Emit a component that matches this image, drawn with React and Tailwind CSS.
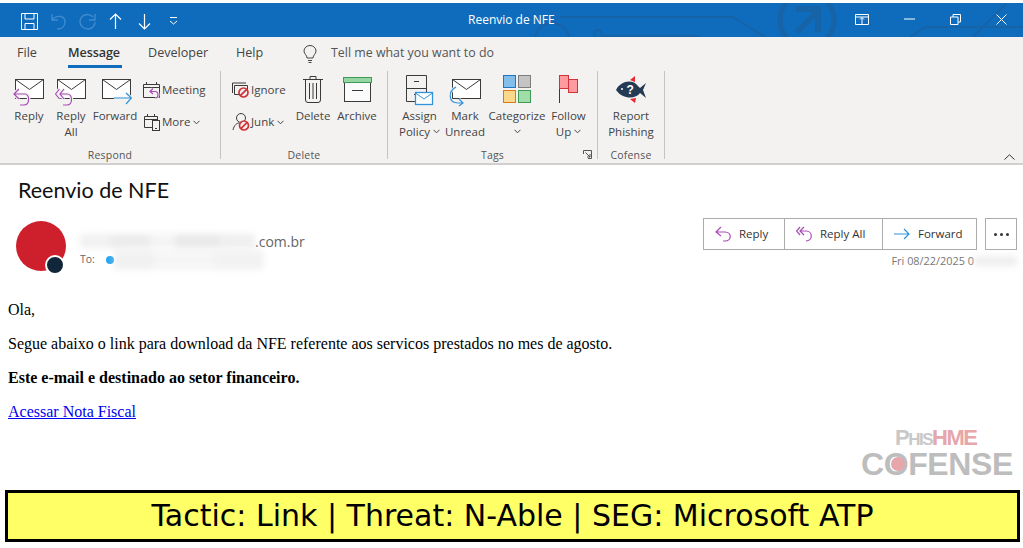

const ui = { fontFamily: '"Open Sans","Noto Sans",sans-serif' };

const P = "#a94cb5";
const B = "#2f93dc";
const K = "#3a3a3a";
const BG = "#f3f2f1";

function Env({ x = 0, y = 0, w = 28, h = 19 }) {
  return (
    <g transform={`translate(${x} ${y})`} fill="none" stroke={K} strokeWidth="1">
      <rect x=".5" y=".5" width={w} height={h} fill="#fff" />
      <path d={`M.5 .5 L${w / 2 + 0.5} ${h * 0.55} L${w + 0.5} .5`} />
    </g>
  );
}

function ReplyIcon() {
  const d = "M6 11 L1 16 L6 21 M1 16 H12 C17 16 17 27 11 27 H7";
  return (
    <svg width="32" height="29" viewBox="0 0 32 29" fill="none">
      <Env x="2" y="1" />
      <path d={d} stroke={BG} strokeWidth="3.5" />
      <path d={d} stroke={P} strokeWidth="1.2" />
    </svg>
  );
}
function ReplyAllIcon() {
  const d = "M4.5 11 L.5 16 L4.5 21 M9 11 L5 16 L9 21 M5 16 H12 C18 16 18 27 12 27 H8";
  return (
    <svg width="32" height="29" viewBox="0 0 32 29" fill="none">
      <Env x="2" y="1" />
      <path d={d} stroke={BG} strokeWidth="3.5" />
      <path d={d} stroke={P} strokeWidth="1.2" />
    </svg>
  );
}
function ForwardIcon() {
  const d = "M16 20 H33 M28 15 L33.5 20 L28 26";
  return (
    <svg width="34" height="29" viewBox="0 0 34 29" fill="none">
      <Env x="4" y="1" />
      <path d={d} stroke={BG} strokeWidth="3" />
      <path d={d} stroke={B} strokeWidth="1.2" />
    </svg>
  );
}
function MeetingIcon() {
  return (
    <svg width="18" height="18" viewBox="0 0 18 18" fill="none">
      <path d="M.5 3.5 H16.5 V16.5 H.5 Z M.5 6.5 H16.5 M3.5 1 V4 M13.5 1 V4" stroke={K} />
      <path d="M10 7.5 L7 10.5 L10 13 M7 10.5 H12 C16 10.5 16 17 12 17" stroke={BG} strokeWidth="3" />
      <path d="M10 7.5 L7 10.5 L10 13 M7 10.5 H12 C16 10.5 16 17 12 17" stroke={P} strokeWidth="1.2" />
    </svg>
  );
}
function MoreIcon() {
  return (
    <svg width="17" height="18" viewBox="0 0 17 18" fill="none" stroke={K}>
      <path d="M.5 3.5 H13.5 V14.5 H.5 Z M.5 6.5 H13.5 M3.5 1 V4 M10.5 1 V4" />
      <rect x="8.5" y="7.5" width="7" height="10" fill={BG} />
      <path d="M11 15.5 H13" />
    </svg>
  );
}
function NoSign({ x, y, r = 4.5 }) {
  return (
    <g transform={`translate(${x} ${y})`} fill={BG} stroke="#d13438" strokeWidth="1.7">
      <circle r={r} />
      <path d={`M${-r * 0.7} ${r * 0.7} L${r * 0.7} ${-r * 0.7}`} />
    </g>
  );
}
function IgnoreIcon() {
  return (
    <svg width="18" height="16" viewBox="0 0 18 16" fill="none" stroke={K}>
      <path d="M.5 1 H14 M.5 1 V11 M2.5 3.5 H15.5 V9 M2.5 3.5 V12.5 H7" />
      <NoSign x="11.5" y="10.5" />
    </svg>
  );
}
function JunkIcon() {
  return (
    <svg width="18" height="18" viewBox="0 0 18 18" fill="none" stroke={K}>
      <circle cx="9" cy="5" r="4.5" />
      <path d="M1 17 C2 12 5 10 7 10" />
      <NoSign x="12" y="12.5" />
    </svg>
  );
}
function TrashIcon() {
  return (
    <svg width="22" height="28" viewBox="0 0 22 28" fill="none" stroke={K}>
      <path d="M1 4.5 H21 M8 4.5 V1.5 H14 V4.5 M3.5 4.5 V25 Q3.5 27.5 6 27.5 H16 Q18.5 27.5 18.5 25 V4.5 M7.5 8 V24 M11 8 V24 M14.5 8 V24" />
    </svg>
  );
}
function ArchiveIcon() {
  return (
    <svg width="29" height="25" viewBox="0 0 29 25" fill="none">
      <rect x="1.5" y="5.5" width="26" height="19" stroke={K} fill="#fbfbfb" />
      <rect x=".5" y=".5" width="28" height="5" fill="#96d6a4" stroke="#3f9a55" />
      <path d="M9 13.5 H20" stroke={K} />
    </svg>
  );
}
function PolicyIcon() {
  return (
    <svg width="28" height="31" viewBox="0 0 28 31" fill="none">
      <path d="M.5 .5 H20.5 V26.5 H.5 Z M.5 13.5 H20.5 M8 6.5 H13 M8 19.5 H13" stroke={K} />
      <rect x="9.5" y="17.5" width="17" height="12" fill="#fff" stroke={B} strokeWidth="1.3" />
      <path d="M9.5 18 L18 24 L26.5 18" stroke={B} />
    </svg>
  );
}
function UnreadIcon() {
  const d = "M7 9 C-1 13 -1 25 9 25 L13 25 M10 21 L14 25 L10 28";
  return (
    <svg width="32" height="29" viewBox="0 0 32 29" fill="none">
      <Env x="3" y="1" />
      <path d={d} stroke={BG} strokeWidth="3" />
      <path d={d} stroke={B} strokeWidth="1.2" />
    </svg>
  );
}
function CategorizeIcon() {
  return (
    <svg width="29" height="29" viewBox="0 0 29 29">
      <rect x=".5" y=".5" width="12" height="12" fill="#83bdea" stroke="#1f76c4" />
      <rect x="15.5" y=".5" width="12" height="12" fill="#c4c4c4" stroke="#7d7d7d" />
      <rect x=".5" y="15.5" width="12" height="12" fill="#fbd98a" stroke="#d77a1c" />
      <rect x="15.5" y="15.5" width="12" height="12" fill="#a0dda8" stroke="#3f9a55" />
    </svg>
  );
}
function FlagIcon() {
  return (
    <svg width="20" height="29" viewBox="0 0 20 29">
      <path d="M.5 1 V28" stroke={K} />
      <rect x=".5" y=".5" width="9" height="13" fill="#ff9a9e" stroke="#d13438" />
      <rect x="9.5" y="4.5" width="9" height="13" fill="#ff9a9e" stroke="#d13438" />
    </svg>
  );
}
function FishIcon() {
  return (
    <svg width="32" height="28" viewBox="0 0 32 28">
      <path d="M15 4 L20 0 L20 6 Z M15 23 L20 27 L21 22 Z" fill="#e8262f" />
      <path d="M1 14 C5 6 15 3 21 8 C23 10 24 11 25 12 L31 7 L28 14 L31 22 L25 17 C21 23 8 24 1 14 Z" fill="#243b53" />
      <circle cx="7" cy="13" r="1" fill="#fff" />
      <text x="11.5" y="18" fontSize="12" fontWeight="700" fill="#fff" fontFamily="Liberation Sans, sans-serif">?</text>
    </svg>
  );
}
function Chev({ className = "" }) {
  return (
    <svg width="7" height="5" viewBox="0 0 7 5" className={className} fill="none" stroke="#444">
      <path d="M.5 .8 L3.5 3.8 L6.5 .8" />
    </svg>
  );
}

function Big({ icon, l1, l2, w, chev, top = "pt-[4px]" }) {
  return (
    <div className="flex flex-col items-center shrink-0" style={{ width: w }}>
      <div className={`h-[33px] flex items-start justify-center ${top}`}>{icon}</div>
      <div className="mt-[1px] text-[11.5px] leading-[16px] whitespace-nowrap">{l1}</div>
      <div className="text-[11.5px] leading-[15px] whitespace-nowrap flex items-center gap-[3px] h-[15px]">
        {l2}
        {chev && <Chev />}
      </div>
    </div>
  );
}
function Small({ icon, label }) {
  return (
    <div className="flex items-center gap-[1px] h-[20px] text-[11.5px] whitespace-nowrap">
      <span className="w-[18px] flex justify-center">{icon}</span>
      {label}
    </div>
  );
}
function Group({ w, label, children, launcher }) {
  return (
    <div className="relative shrink-0 flex flex-col border-r border-[#c4c4c4] h-[88px] mt-[1px]" style={{ width: w }}>
      <div className="flex flex-1 items-start">{children}</div>
      <div className="text-[10.5px] leading-[14px] mb-[-3px] text-center text-[#555] tracking-[0.2px]">{label}</div>
      {launcher}
    </div>
  );
}

function Action({ icon, label, w }) {
  return (
    <div className="flex items-center pl-[11px] gap-[7px] h-full border-r border-[#ababab] last:border-r-0 text-[11.5px] text-[#333]" style={{ width: w }}>
      {icon}
      {label}
    </div>
  );
}

export default function App() {
  return (
    <div className="relative w-[1023px] h-[548px] bg-white overflow-hidden flex flex-col" style={ui}>
      {/* title bar */}
      <div className="relative mt-[3px] h-[34px] shrink-0 bg-[#0f6cbd] text-white flex items-center pl-[21px] pr-[20px]">
        <svg className="absolute left-0 top-0 pointer-events-none" width="1023" height="34" viewBox="0 0 1023 34" fill="none" stroke="#1763a8" strokeWidth="2">
          <circle cx="807" cy="17" r="27" strokeWidth="5" />
          <path d="M796 6 H818 V29 M818 8 L797 29" strokeWidth="6" />
          <path d="M560 14 H733 L765 34" />
          <path d="M910 34 L925 24 H1023 M973 34 L1007 0" />
          <circle cx="552" cy="37" r="17" />
          <circle cx="598" cy="31" r="4" />
          <path d="M602 33 H700" />
        </svg>
        <div className="relative flex items-center mt-[2px]">
          <svg width="17" height="17" viewBox="0 0 17 17" fill="none" stroke="#fff"><path d="M.5 .5 H16.5 V16.5 H.5 Z M4 .5 V6 H13 V.5 M4 16.5 V10.5 H13 V16.5" /></svg>
          <svg className="ml-[13px]" width="15" height="17" viewBox="0 0 15 17" fill="none" stroke="#3f8bd0" strokeWidth="1.4"><path d="M1 1 V7 H7 M1 7 C6 1 14 3 14 9 C14 13 11 16 6 16" /></svg>
          <svg className="ml-[13px]" width="17" height="17" viewBox="0 0 17 17" fill="none" stroke="#3f8bd0" strokeWidth="1.4"><path d="M16 1 V7 H10 M14 4 C9 -1 1 2 1 9 C1 13 5 16 9 16 C13 16 16 13 16 9" /></svg>
          <svg className="ml-[13px]" width="13" height="17" viewBox="0 0 13 17" fill="none" stroke="#fff" strokeWidth="1.2"><path d="M6.5 16 V1 M1 6.5 L6.5 1 L12 6.5" /></svg>
          <svg className="ml-[16px]" width="13" height="17" viewBox="0 0 13 17" fill="none" stroke="#fff" strokeWidth="1.2"><path d="M6.5 1 V16 M1 10.5 L6.5 16 L12 10.5" /></svg>
          <svg className="ml-[18px]" width="9" height="8" viewBox="0 0 9 8" fill="none" stroke="#fff"><path d="M1 .5 H8 M1 4 L4.5 7 L8 4" /></svg>
        </div>
        <div className="relative ml-[290px] text-[12px] mb-[1px]">Reenvio de NFE</div>
        <div className="relative ml-auto flex items-center mr-[-4px] mb-[2px]">
          <svg width="14" height="11" viewBox="0 0 14 11" fill="none" stroke="#fff"><path d="M.5 .5 H13.5 V10.5 H.5 Z M.5 3 H13.5 M7 10 V4 M5 5.5 L7 3.5 L9 5.5" /></svg>
          <svg className="ml-[35px]" width="11" height="2" viewBox="0 0 11 2" stroke="#fff"><path d="M0 1 H11" /></svg>
          <svg className="ml-[35px]" width="11" height="11" viewBox="0 0 11 11" fill="none" stroke="#fff"><path d="M.5 3 H8 V10.5 H.5 Z M3 3 V.5 H10.5 V8 H8" /></svg>
          <svg className="ml-[35px]" width="11" height="11" viewBox="0 0 11 11" stroke="#fff" fill="none"><path d="M.5 .5 L10.5 10.5 M10.5 .5 L.5 10.5" /></svg>
        </div>
      </div>

      {/* tabs */}
      <div className="h-[33px] shrink-0 bg-[#f3f2f1] flex items-center text-[12.6px] text-[#444]">
        <div className="w-[68px] pl-[17px]">File</div>
        <div className="relative w-[80px] font-semibold text-[#333] -tracking-[0.1px]">
          Message
          <div className="absolute left-0 top-[21px] w-[54px] h-[3px] bg-[#0f6cbd]"></div>
        </div>
        <div className="w-[88px]">Developer</div>
        <div className="w-[67px]">Help</div>
        <svg width="14" height="18" viewBox="0 0 14 18" fill="none" stroke="#444"><path d="M4 13 C4 10 1 9 1 6 A6 5.5 0 0 1 13 6 C13 9 10 10 10 13 Z M5 15.5 H9 M5.5 17.5 H8.5" /></svg>
        <div className="ml-[14px] text-[#555] text-[12.4px]">Tell me what you want to do</div>
      </div>

      {/* ribbon */}
      <div className="relative h-[95px] shrink-0 bg-[#f3f2f1] border-b-2 border-[#d2d0ce] flex text-[#444]">
        <Group w={221} label="Respond">
          <div className="flex mt-[3px] ml-[9px]">
            <Big icon={<ReplyIcon />} l1="Reply" w={40} />
            <Big icon={<ReplyAllIcon />} l1="Reply" l2="All" w={44} />
            <Big icon={<ForwardIcon />} l1="Forward" w={44} />
          </div>
          <div className="flex flex-col gap-[12px] mt-[9px] ml-[6px]">
            <Small icon={<MeetingIcon />} label="Meeting" />
            <Small icon={<MoreIcon />} label={<span className="flex items-center gap-[3px]">More<Chev /></span>} />
          </div>
        </Group>
        <Group w={167} label="Delete">
          <div className="flex flex-col gap-[12px] mt-[9px] ml-[11px] w-[60px] shrink-0">
            <Small icon={<IgnoreIcon />} label="Ignore" />
            <Small icon={<JunkIcon />} label={<span className="flex items-center gap-[3px]">Junk<Chev /></span>} />
          </div>
          <div className="flex mt-[3px]">
            <Big icon={<TrashIcon />} l1="Delete" w={42} top="pt-[1px]" />
            <Big icon={<ArchiveIcon />} l1="Archive" w={46} top="pt-[3px]" />
          </div>
        </Group>
        <Group
          w={210}
          label="Tags"
          launcher={
            <svg className="absolute right-[5px] bottom-[0px]" width="9" height="9" viewBox="0 0 9 9" fill="none" stroke="#555">
              <path d="M.5 4 V.5 H8.5 V8.5 H5 M2.5 2.5 L7 7 M7 4 V7 H4" />
            </svg>
          }
        >
          <div className="flex mt-[3px] ml-[9px]">
            <Big icon={<PolicyIcon />} l1="Assign" l2="Policy" chev w={45} top="pt-[1px]" />
            <Big icon={<UnreadIcon />} l1="Mark" l2="Unread" w={46} />
            <Big icon={<CategorizeIcon />} l1="Categorize" l2="" chev w={58} top="pt-[1px]" />
            <Big icon={<FlagIcon />} l1="Follow" l2="Up" chev w={45} top="pt-[1px]" />
          </div>
        </Group>
        <Group w={67} label="Cofense">
          <div className="flex mt-[3px] w-full justify-center">
            <Big icon={<FishIcon />} l1="Report" l2="Phishing" w={60} top="pt-[2px]" />
          </div>
        </Group>
        <svg className="absolute right-[8px] bottom-[3px]" width="11" height="6" viewBox="0 0 11 6" fill="none" stroke="#333">
          <path d="M.5 5.5 L5.5 .8 L10.5 5.5" />
        </svg>
      </div>

      {/* subject */}
      <div className="h-[53px] shrink-0 pl-[18px] pt-[10px] text-[21.5px] leading-[30px] text-[#111]" style={{ fontFamily: '"Lato","Open Sans",sans-serif' }}>
        Reenvio de NFE
      </div>

      {/* header */}
      <div className="h-[83px] shrink-0 flex pl-[16px] pr-[6px]">
        <div className="relative w-[50px] h-[50px] mt-[3px] rounded-full bg-[#cd202c] shrink-0">
          <div className="absolute left-[29px] top-[34px] w-[20px] h-[20px] rounded-full bg-[#12263a] border-[2px] border-white"></div>
        </div>
        <div className="relative ml-[14px] flex-1">
          <div className="flex items-center h-[20px] mt-[13px]">
            <div className="flex w-[175px] h-[14px] blur-[3px] opacity-60">
              <div className="w-[30px] bg-[#e8e8e8]"></div>
              <div className="w-[40px] bg-[#dedede]"></div>
              <div className="w-[25px] bg-[#ececec]"></div>
              <div className="w-[45px] bg-[#dadada]"></div>
              <div className="w-[35px] bg-[#e4e4e4]"></div>
            </div>
            <span className="text-[14px] text-[#666]">.com.br</span>
          </div>
          <div className="flex items-center h-[18px] text-[10.5px] text-[#666]">
            <span>To:</span>
            <span className="w-[8px] h-[8px] rounded-full bg-[#2ba6f0] ml-[11px]"></span>
            <div className="flex w-[150px] h-[20px] blur-[3px] opacity-50">
              <div className="w-[40px] bg-[#e4e4e4]"></div>
              <div className="w-[60px] bg-[#ededed]"></div>
              <div className="w-[50px] bg-[#e6e6e6]"></div>
            </div>
          </div>
        </div>
        <div className="flex flex-col items-end shrink-0">
          <div className="flex gap-[8px]">
            <div className="flex h-[32px] w-[274px] border border-[#ababab] bg-white">
              <Action w={81} label="Reply" icon={<svg width="17" height="16" viewBox="0 0 17 16" fill="none" stroke={P} strokeWidth="1.2"><path d="M6 1 L1 6 L6 10 M1 6 H10 C17 6 17 15 10 15 H8" /></svg>} />
              <Action w={98} label="Reply All" icon={<svg width="17" height="16" viewBox="0 0 17 16" fill="none" stroke={P} strokeWidth="1.2"><path d="M4 1 L0.5 5 L4 9 M8 1 L4 5 L8 9 M4 5 H10 C17 5 17 15 10 15" /></svg>} />
              <Action w={93} label="Forward" icon={<svg width="17" height="12" viewBox="0 0 17 12" fill="none" stroke={B} strokeWidth="1.2"><path d="M0 6 H15 M10 1 L15 6 L10 11" /></svg>} />
            </div>
            <div className="flex items-center justify-center gap-[3px] w-[32px] h-[32px] border border-[#ababab] bg-white">
              <span className="w-[3px] h-[3px] rounded-full bg-[#333]"></span>
              <span className="w-[3px] h-[3px] rounded-full bg-[#333]"></span>
              <span className="w-[3px] h-[3px] rounded-full bg-[#333]"></span>
            </div>
          </div>
          <div className="flex items-center h-[16px] mt-[3px] text-[10.9px] text-[#777]">
            <span>Fri 08/22/2025 0</span>
            <div className="w-[43px] h-[10px] bg-[#e8e8e8] opacity-70 blur-[3px]"></div>
          </div>
        </div>
      </div>

      {/* body */}
      <div className="relative flex-1 px-[8px] text-[16px] leading-[18px] text-black" style={{ fontFamily: '"Liberation Serif",serif' }}>
        <p className="mb-[16px]">Ola,</p>
        <p className="mb-[16px]">Segue abaixo o link para download da NFE referente aos servicos prestados no mes de agosto.</p>
        <p className="mb-[16px] font-bold">Este e-mail e destinado ao setor financeiro.</p>
        <p><a className="text-[#0000ee] underline">Acessar Nota Fiscal</a></p>
      </div>

      {/* watermark */}
      <div className="absolute left-[861px] top-[428px] w-[152px] flex flex-col" style={{ fontFamily: '"Liberation Sans",sans-serif' }}>
        <div className="ml-[34px] h-[21px] leading-[20px] font-bold whitespace-nowrap -tracking-[1.5px] flex items-baseline">
          <span className="text-[22px] text-[#c8c8c8]">P</span>
          <span className="text-[17px] text-[#c8c8c8]">HIS</span>
          <span className="text-[22px] text-[#e6a6aa]">HME</span>
        </div>
        <div className="relative mt-[3px] text-[32px] leading-[24px] font-bold text-[#bdbdbd] whitespace-nowrap -tracking-[0.4px]">
          COFENSE
          <span className="absolute left-[30px] top-[5px] w-[14px] h-[14px] rounded-full bg-[#e6a6aa]"></span>
        </div>
      </div>

      {/* banner */}
      <div className="absolute left-[5px] top-[490px] w-[1015px] h-[52px] border-[3px] border-black bg-[#ffff66] flex items-center justify-center pb-[2px] text-[30px] text-black whitespace-nowrap" style={{ fontFamily: '"DejaVu Sans",sans-serif' }}>
        Tactic: Link | Threat: N-Able | SEG: Microsoft ATP
      </div>
    </div>
  );
}
